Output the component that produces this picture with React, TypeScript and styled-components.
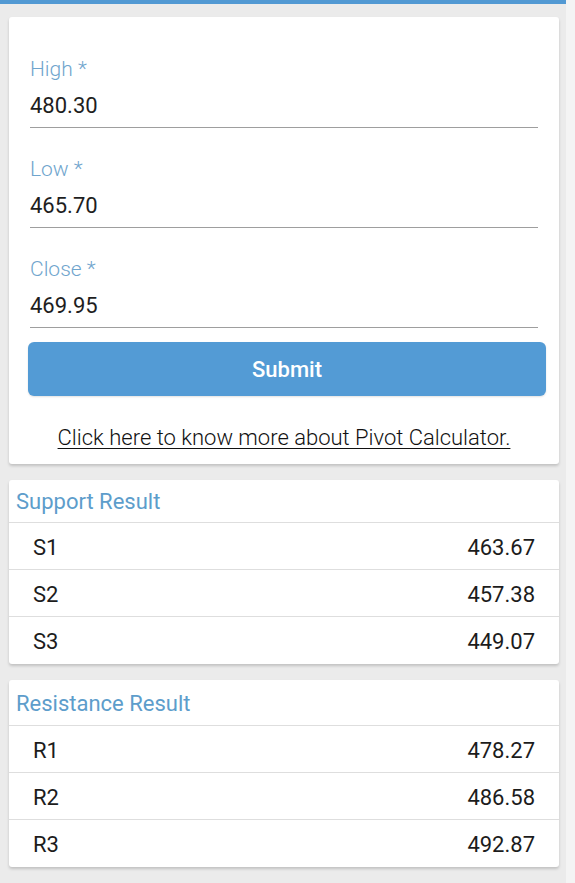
import styled, { createGlobalStyle } from "styled-components";

const GlobalStyle = createGlobalStyle`
  html, body {
    margin: 0;
    padding: 0;
    background: #f4f4f4;
    font-family: Roboto, "Liberation Sans", sans-serif;
  }
`;

const fields = [
  { label: "High *", value: "480.30" },
  { label: "Low *", value: "465.70" },
  { label: "Close *", value: "469.95" },
];

const support = [
  { name: "S1", value: "463.67" },
  { name: "S2", value: "457.38" },
  { name: "S3", value: "449.07" },
];

const resistance = [
  { name: "R1", value: "478.27" },
  { name: "R2", value: "486.58" },
  { name: "R3", value: "492.87" },
];

function ResultCard({
  title,
  rows,
  headerHeight,
}: {
  title: string;
  rows: { name: string; value: string }[];
  headerHeight: number;
}) {
  return (
    <Card>
      <CardHeader $height={headerHeight}>{title}</CardHeader>
      {rows.map((r) => (
        <ResultRow key={r.name}>
          <span>{r.name}</span>
          <span>{r.value}</span>
        </ResultRow>
      ))}
    </Card>
  );
}

export default function App() {
  return (
    <>
      <GlobalStyle />
      <Page>
        <FormCard>
          {fields.map((f) => (
            <Field key={f.label}>
              <FieldLabel>{f.label}</FieldLabel>
              <FieldInput type="text" defaultValue={f.value} />
            </Field>
          ))}
          <SubmitButton>Submit</SubmitButton>
          <InfoLink href="#">Click here to know more about Pivot Calculator.</InfoLink>
        </FormCard>
        <ResultCard title="Support Result" rows={support} headerHeight={43} />
        <ResultCard title="Resistance Result" rows={resistance} headerHeight={46} />
      </Page>
    </>
  );
}

const Page = styled.div`
  width: 566px;
  min-height: 883px;
  box-sizing: border-box;
  background: #ebebeb;
  border-top: 4px solid #5299d3;
  padding: 13px 7px 16px 9px;
  display: flex;
  flex-direction: column;
  gap: 16px;
`;

const Card = styled.div`
  background: #fff;
  border-radius: 3px;
  box-shadow: 0 2px 3px rgba(0, 0, 0, 0.18);
  overflow: hidden;
`;

const FormCard = styled(Card)`
  display: flex;
  flex-direction: column;
  padding: 40px 21px 14px 21px;
  overflow: visible;
`;

const Field = styled.div`
  display: flex;
  flex-direction: column;
  margin-bottom: 29px;

  &:nth-of-type(3) {
    margin-bottom: 14px;
  }
`;

const FieldLabel = styled.label`
  font-size: 21px;
  line-height: 24px;
  font-weight: 300;
  color: #6fa5cd;
  margin-bottom: 12px;
`;

const FieldInput = styled.input`
  border: none;
  border-bottom: 1px solid #9e9e9e;
  padding: 1px 0 9px 0;
  font-family: Roboto, "Liberation Sans", sans-serif;
  font-size: 22px;
  line-height: 24px;
  color: #1e1e1e;
  background: transparent;
  outline: none;
`;

const SubmitButton = styled.button`
  height: 54px;
  margin: 0 -8px 0 -2px;
  border: none;
  border-radius: 6px;
  background: #539bd5;
  color: #fff;
  font-family: Roboto, "Liberation Sans", sans-serif;
  font-size: 22px;
  font-weight: 500;
  box-shadow: 0 1px 2px rgba(0, 0, 0, 0.12);
  cursor: pointer;
`;

const InfoLink = styled.a`
  margin-top: 30px;
  text-align: center;
  font-size: 22px;
  line-height: 24px;
  font-weight: 300;
  color: #111;
  text-decoration: underline;
  text-underline-offset: 3px;
  text-decoration-thickness: 1px;
`;

const CardHeader = styled.div<{ $height: number }>`
  height: ${(p) => p.$height}px;
  box-sizing: border-box;
  display: flex;
  align-items: center;
  padding: 1px 0 0 7px;
  font-size: 22px;
  color: #5d9dcb;
  border-bottom: 1px solid #dedede;
`;

const ResultRow = styled.div`
  height: 47px;
  box-sizing: border-box;
  display: flex;
  align-items: center;
  justify-content: space-between;
  padding: 2px 24px 0 24px;
  font-size: 22px;
  color: #1c1c1c;
  border-bottom: 1px solid #dedede;

  &:last-child {
    border-bottom: none;
  }
`;
